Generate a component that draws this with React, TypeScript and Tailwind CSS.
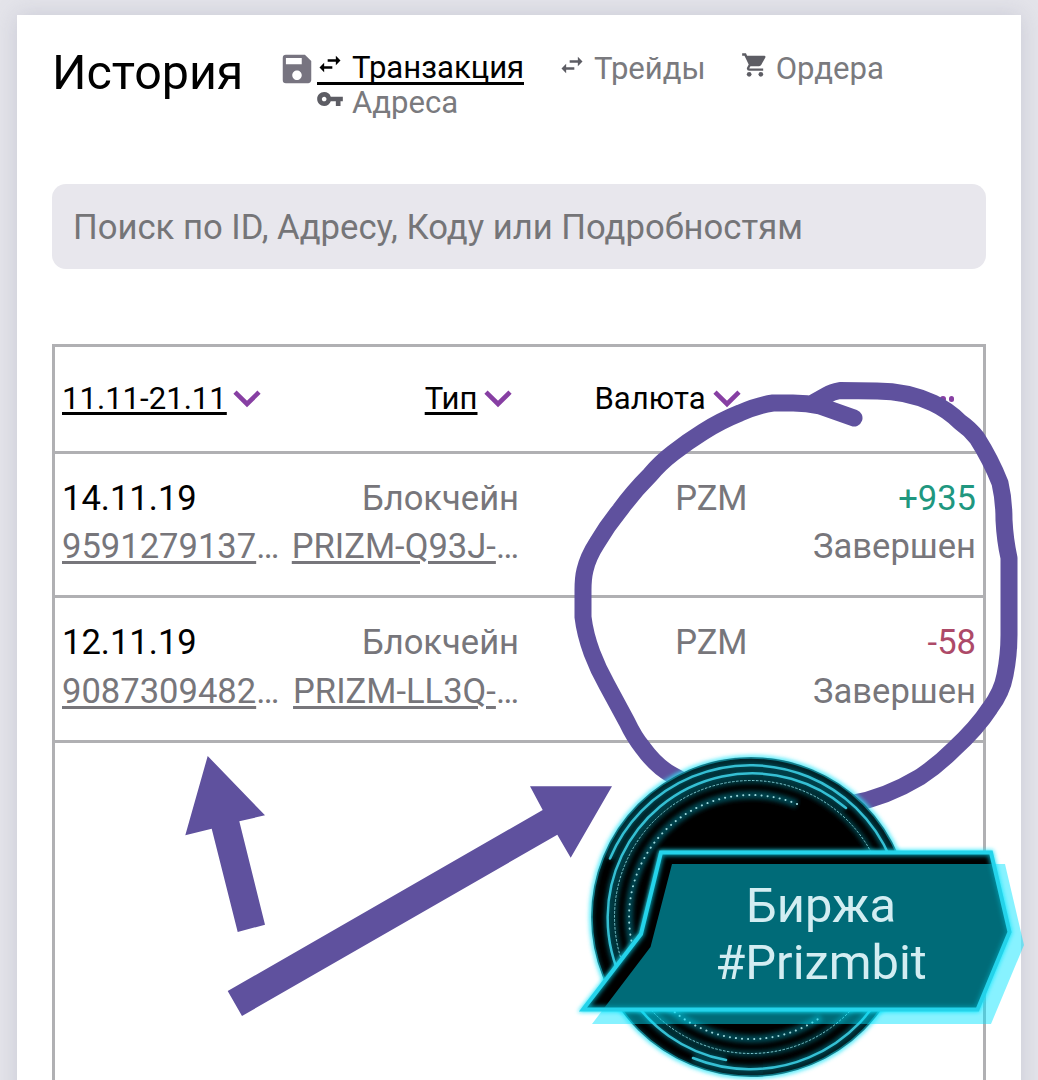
import { MdSave, MdSwapHoriz, MdVpnKey } from "react-icons/md"

const rows = [
  { date: "14.11.19", id: "9591279137", type: "Блокчейн", address: "PRIZM-Q93J-", currency: "PZM", amount: "+935", status: "Завершен" },
  { date: "12.11.19", id: "9087309482", type: "Блокчейн", address: "PRIZM-LL3Q-", currency: "PZM", amount: "-58", status: "Завершен" },
]

function Chevron() {
  return (
    <svg className="w-[28px] h-[18px] shrink-0 -mt-px" viewBox="0 0 28 18" fill="none" stroke="#873fa3" strokeWidth="4.6">
      <path d="M2 2.2 L14 14 L26 2.2" />
    </svg>
  )
}

function Cart() {
  return (
    <svg className="size-[28px] mr-[7px] text-[#5d5d64] shrink-0" viewBox="0 0 24 24" fill="currentColor">
      <path d="M1 2 L1 4 L3 4 L6.600 11.590 L5.250 14.040 Q5 14.500 5 15 Q5.100 16.900 7 17 L19 17 L19 15 L7.420 15 Q7.170 15 7.170 14.750 L7.200 14.630 L8.100 13 L15.550 13 Q16.700 12.950 17.300 11.970 L20.880 5.480 Q21.300 4.200 20 4 L5.210 4 L4.270 2 Z" />
      <circle cx="7" cy="20" r="2" />
      <circle cx="17" cy="20" r="2" />
    </svg>
  )
}

function Header() {
  return (
    <header className="flex h-[133px]">
      <h1 className="w-[230px] text-[48.4px] leading-[58px] pt-[29px]">История</h1>
      <MdSave className="size-[38px] text-[#777480] -ml-[4px] mt-[35px] shrink-0" />
      <nav className="flex flex-wrap content-start w-[600px] pt-[35px] ml-px text-[31.1px] leading-[35px] text-[#7a7a7e]">
        <a className="flex h-[35px] w-[207px] mr-[41px] border-b-[3px] border-black text-black">
          <MdSwapHoriz className="size-[28px] -ml-px mr-[8px] shrink-0" />
          Транзакция
        </a>
        <a className="flex h-[35px] mr-[35px] pt-px">
          <MdSwapHoriz className="size-[28px] -ml-[7px] mr-[8px] text-[#5d5d64] shrink-0" />
          Трейды
        </a>
        <a className="flex h-[35px] pt-px">
          <Cart />
          Ордера
        </a>
        <a className="flex h-[35px] w-full">
          <MdVpnKey className="size-[28px] -ml-px mr-[8px] text-[#5d5d64] shrink-0" />
          Адреса
        </a>
      </nav>
    </header>
  )
}

function Table() {
  return (
    <section className="mt-[75px] h-[760px] border-[3px] border-[#b0b0b3]">
      <div className="grid grid-cols-4 items-center h-[107px] pt-[2px] pl-[7px] pr-[8px] border-b-[3px] border-[#b0b0b3] text-[31.1px]">
        <div className="flex items-center gap-[6px]">
          <span className="underline decoration-[3px] underline-offset-[3px]">11.11-21.11</span>
          <Chevron />
        </div>
        <div className="flex items-center justify-end gap-[6px] pr-[7px]">
          <span className="underline decoration-[3px] underline-offset-[3px]">Тип</span>
          <Chevron />
        </div>
        <div className="flex items-center justify-end gap-[7px] pr-[6px]">
          <span>Валюта</span>
          <Chevron />
        </div>
        <div className="flex justify-end gap-[3px] pr-[21px] -mt-px">
          <i className="size-[5.5px] rounded-full bg-[#873fa3]" />
          <i className="size-[5.5px] rounded-full bg-[#873fa3]" />
          <i className="size-[5.5px] rounded-full bg-[#873fa3]" />
        </div>
      </div>
      {rows.map((row) => (
        <div key={row.id} className="grid grid-cols-4 h-[144.5px] pt-[20px] pl-[7px] pr-[7px] border-b-[3px] border-[#b0b0b3] text-[34.55px] leading-[48.5px] text-[#77767b] whitespace-nowrap">
          <div>
            <p className="text-black">{row.date}</p>
            <p><span className="underline decoration-[3px] underline-offset-[3px]">{row.id}</span>…</p>
          </div>
          <div className="text-right">
            <p>{row.type}</p>
            <p><span className="underline decoration-[3px] underline-offset-[3px]">{row.address}</span>…</p>
          </div>
          <p className="text-right">{row.currency}</p>
          <div className="text-right">
            <p className={row.amount.startsWith("+") ? "text-[#20977f]" : "text-[#ad4a68]"}>{row.amount}</p>
            <p>{row.status}</p>
          </div>
        </div>
      ))}
    </section>
  )
}

// hand drawn circle and the two arrows
function Marks() {
  return (
    <svg className="absolute inset-0 w-[1038px] h-[1080px]" viewBox="0 0 1038 1080" fill="#5f519e">
      <path
        d="M854 418 L820 406 Q807 403 793 403 L773 403 Q758 405 740 413 Q720 421 703 432 Q687 442 673 453 Q660 463 650 475 Q633 492 620 510 Q607 526 597 543 Q588 557 585 570 Q583 578 583 590 L583 617 Q585 634 592 653 Q598 669 607 685 L627 722 Q634 737 643 748 Q656 766 672 775 L700 790 M850 804 Q885 798 920 777 Q938 765 953 750 Q977 728 990 708 Q1002 692 1005 675 Q1009 655 1009 635 L1009 558 Q1005 540 1004 520 Q1004 500 1000 483 Q991 460 977 438 Q970 429 960 422 Q948 410 933 403 Q907 391 877 391 L840 390.500 Q832 392 827 395 L813 403"
        fill="none"
        stroke="#5f519e"
        strokeWidth="17"
        strokeLinecap="round"
        strokeLinejoin="round"
      />
      <path d="M207.700 756 L265 815.300 L239.300 821.300 L265 924.700 L237.700 932 L211.700 828.700 L185.300 835.300Z" />
      <path d="M530 786.300 L612 786.300 L570.700 857.700 L557.300 834.700 L242 1016 L227.700 991 L542.700 810Z" />
    </svg>
  )
}

function Badge() {
  return (
    <div className="absolute left-[570px] top-[745px] w-[468px] h-[335px]">
      <svg className="absolute inset-0 size-full" viewBox="570 745 468 335" fill="none">
        <defs>
          <filter id="glow" x="-20%" y="-20%" width="140%" height="140%">
            <feGaussianBlur stdDeviation="2" />
          </filter>
          <clipPath id="disc">
            <circle cx="751" cy="917" r="160" />
          </clipPath>
          <clipPath id="plate">
            <path d="M582 1009.500 L641 934 L661 852.500 L991 852.500 L1009.500 932 L977.500 1009.500Z" />
          </clipPath>
        </defs>
        <circle cx="751" cy="917" r="159.500" stroke="#35e8fa" strokeWidth="4" filter="url(#glow)" />
        <circle cx="751" cy="917" r="159" fill="#000" stroke="#1fb3c5" strokeWidth="1.500" />
        <g clipPath="url(#disc)">
          <g filter="url(#glow)" stroke="#004c57">
            <path d="M610 858.500 A152 152 0 1 1 693 1058" strokeWidth="7" />
            <path d="M726 1060 A144.500 144.500 0 1 1 846 808" strokeWidth="6" />
            <circle cx="751" cy="917" r="136.500" strokeWidth="6" stroke="#003a42" />
            <path d="M797 804 A122 122 0 1 0 821 1017" strokeWidth="8" stroke="#00454f" />
            <circle cx="751" cy="917" r="159.500" strokeWidth="3" />
          </g>
          <g stroke="#35bfd3" strokeWidth="2.500" strokeLinecap="round">
            <path d="M610 858.500 A152 152 0 1 1 693 1058" />
            <path d="M726 1060 A144.500 144.500 0 1 1 846 808" />
          </g>
          <circle cx="751" cy="917" r="136.500" stroke="#7cc5cd" strokeWidth="1" strokeDasharray="2.500 1.500" />
          <path d="M797 804 A122 122 0 1 0 821 1017" stroke="#9ad5da" strokeWidth="2" strokeLinecap="round" strokeDasharray="0.100 6" />
        </g>
        <path d="M583 1009.500 L641 934 L661 852.500 L991 852.500 L1009.500 932 L977.500 1009.500Z" stroke="#1fe6fb" strokeWidth="5" filter="url(#glow)" />
        <path d="M583 1009.500 L641 934 L661 852.500 L991 852.500 L1009.500 932 L977.500 1009.500Z" fill="#000" />
        <path d="M592 1024 L650.500 947 L672 864 L1005 864 L1024 945 L991 1024Z" fill="#00e4ff" fillOpacity="0.470" />
        <g clipPath="url(#plate)">
          <path d="M583 1009.500 L641 934 L661 852.500 L991 852.500 L1009.500 932 L977.500 1009.500Z" stroke="#0091a3" strokeWidth="7" filter="url(#glow)" />
        </g>
        <path d="M583 1009.500 L641 934 L661 852.500 L991 852.500 L1009.500 932 L977.500 1009.500Z" stroke="#24d3ea" strokeWidth="4" />
      </svg>
      <p className="relative pt-[133px] pl-[34px] w-[468px] text-center text-[48.8px] leading-[56.5px] text-[#d3edf2]">
        Биржа<br />
        #Prizmbit
      </p>
    </div>
  )
}

export default function App() {
  return (
    <div className="relative w-[1038px] h-[1080px] overflow-hidden bg-[#e4e4ea] pt-[15px] px-[17px] font-[Roboto,sans-serif] text-black">
      <main className="h-[1100px] bg-white px-[35px] pt-0 shadow-[0_0_22px_rgba(120,125,150,0.25)]">
        <Header />
        <div className="mt-[35.5px] h-[85px] rounded-[14px] bg-[#e8e7ed] pl-[21px] text-[34.65px] leading-[87px] text-[#757578]">
          Поиск по ID, Адресу, Коду или Подробностям
        </div>
        <Table />
      </main>
      <Marks />
      <Badge />
    </div>
  )
}
